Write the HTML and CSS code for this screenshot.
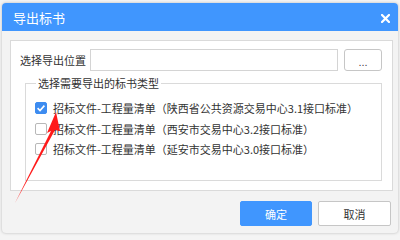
FILE: index.html
```html
<!DOCTYPE html>
<html lang="zh-CN">
<head>
  <meta charset="UTF-8" />
  <title>导出标书</title>
  <link rel="stylesheet" href="styles.css">
</head>
<body>

<!-- Export dialog -->
<div class="dialog">
  <div class="titlebar">
    <span class="title">导出标书</span>
    <span class="close">
      <svg width="9" height="9" viewBox="0 0 9 9"><path d="M1 1L8 8M8 1L1 8" stroke="#fff" stroke-width="2.2" stroke-linecap="square"/></svg>
    </span>
  </div>

  <div class="dialog-body">
    <div class="panel">
      <div class="path-row">
        <label>选择导出位置</label>
        <input type="text" class="path-input" />
        <button class="browse-btn">...</button>
      </div>

      <fieldset class="group">
        <legend>选择需要导出的标书类型</legend>
        <div class="option">
          <span class="box checked">
            <svg width="12" height="12" viewBox="0 0 12 12"><path d="M2.6 6.2L5 8.5L9.4 3.6" fill="none" stroke="#fff" stroke-width="1.6"/></svg>
          </span>
          <span>招标文件-工程量清单（陕西省公共资源交易中心3.1接口标准）</span>
        </div>
        <div class="option">
          <span class="box"></span>
          <span>招标文件-工程量清单（西安市交易中心3.2接口标准）</span>
        </div>
        <div class="option">
          <span class="box"></span>
          <span>招标文件-工程量清单（延安市交易中心3.0接口标准）</span>
        </div>
      </fieldset>
    </div>

    <div class="actions">
      <button class="ok-btn">确定</button>
      <button class="cancel-btn">取消</button>
    </div>
  </div>
</div>

<!-- Red annotation arrow -->
<svg class="arrow" width="400" height="240" viewBox="0 0 400 240">
  <polygon points="15,203 51,131 47,133 56,112 60,131 55,130" fill="#ff1a1a"/>
</svg>

</body>
</html>
```

FILE: styles.css
```css
* { margin: 0; padding: 0; box-sizing: border-box; }

body {
  font-family: "Noto Sans CJK SC", "Noto Sans", sans-serif;
  font-size: 11px;
  color: #333;
  background: #f4f4f4;
  width: 400px;
  height: 240px;
  overflow: hidden;
  padding-top: 3px;
}

.dialog {
  margin: 0 2px;
  width: 396px;
  height: 230px;
  background: #f3f3f3;
  border-radius: 4px;
  box-shadow: 0 0 3px rgba(0,0,0,0.25);
  overflow: hidden;
}

.titlebar {
  height: 28px;
  background: #4096fe;
  display: flex;
  justify-content: space-between;
  align-items: center;
  padding: 2px 8px 0 11px;
}

.title {
  color: white;
  font-size: 13px;
  line-height: 18px;
}

.close {
  display: flex;
}

.dialog-body {
  padding: 9px 5px 0 8px;
}

.panel {
  height: 151px;
  background: white;
  border: 1px solid #dadada;
  padding: 8px 0 0 9px;
}

.path-row {
  display: flex;
  align-items: center;
  height: 22px;
}

.path-row label {
  width: 70px;
  line-height: 16px;
}

.path-input {
  width: 248px;
  height: 22px;
  border: 1px solid #d4d4d4;
  background: white;
}

.browse-btn {
  width: 38px;
  height: 22px;
  margin-left: 6px;
  border: 1px solid #c6c6c6;
  border-radius: 3px;
  background: white;
  font-family: "Liberation Sans", sans-serif;
  font-size: 11px;
  color: #444;
  padding-top: 4px;
}

.group {
  margin: 4px 10px 0 5px;
  height: 106px;
  border: 1px solid #dadada;
  padding: 7px 0 0 9px;
}

.group legend {
  margin-left: 1px;
  padding: 0 2px;
  line-height: 16px;
}

.option {
  display: flex;
  align-items: center;
  height: 20.5px;
  line-height: 16px;
}

.box {
  width: 12px;
  height: 12px;
  margin-right: 6px;
  border: 1px solid #b8b8b8;
  border-radius: 2px;
  background: white;
}

.box.checked {
  border-color: #3d8cf0;
  background: #3d8cf0;
  display: flex;
  margin-left: 0;
}

.box.checked svg {
  margin: -1px;
}

.actions {
  display: flex;
  justify-content: flex-end;
  gap: 6px;
  margin-top: 10px;
  padding-right: 2px;
}

.ok-btn, .cancel-btn {
  height: 25px;
  border-radius: 2px;
  font-family: "Noto Sans CJK SC", sans-serif;
  font-size: 11px;
}

.ok-btn {
  width: 72px;
  background: #4096fe;
  border: 1px solid #4096fe;
  color: white;
}

.cancel-btn {
  width: 73px;
  background: white;
  border: 1px solid #c6c6c6;
  color: #333;
}

.arrow {
  position: absolute;
  top: 0;
  left: 0;
}
```
